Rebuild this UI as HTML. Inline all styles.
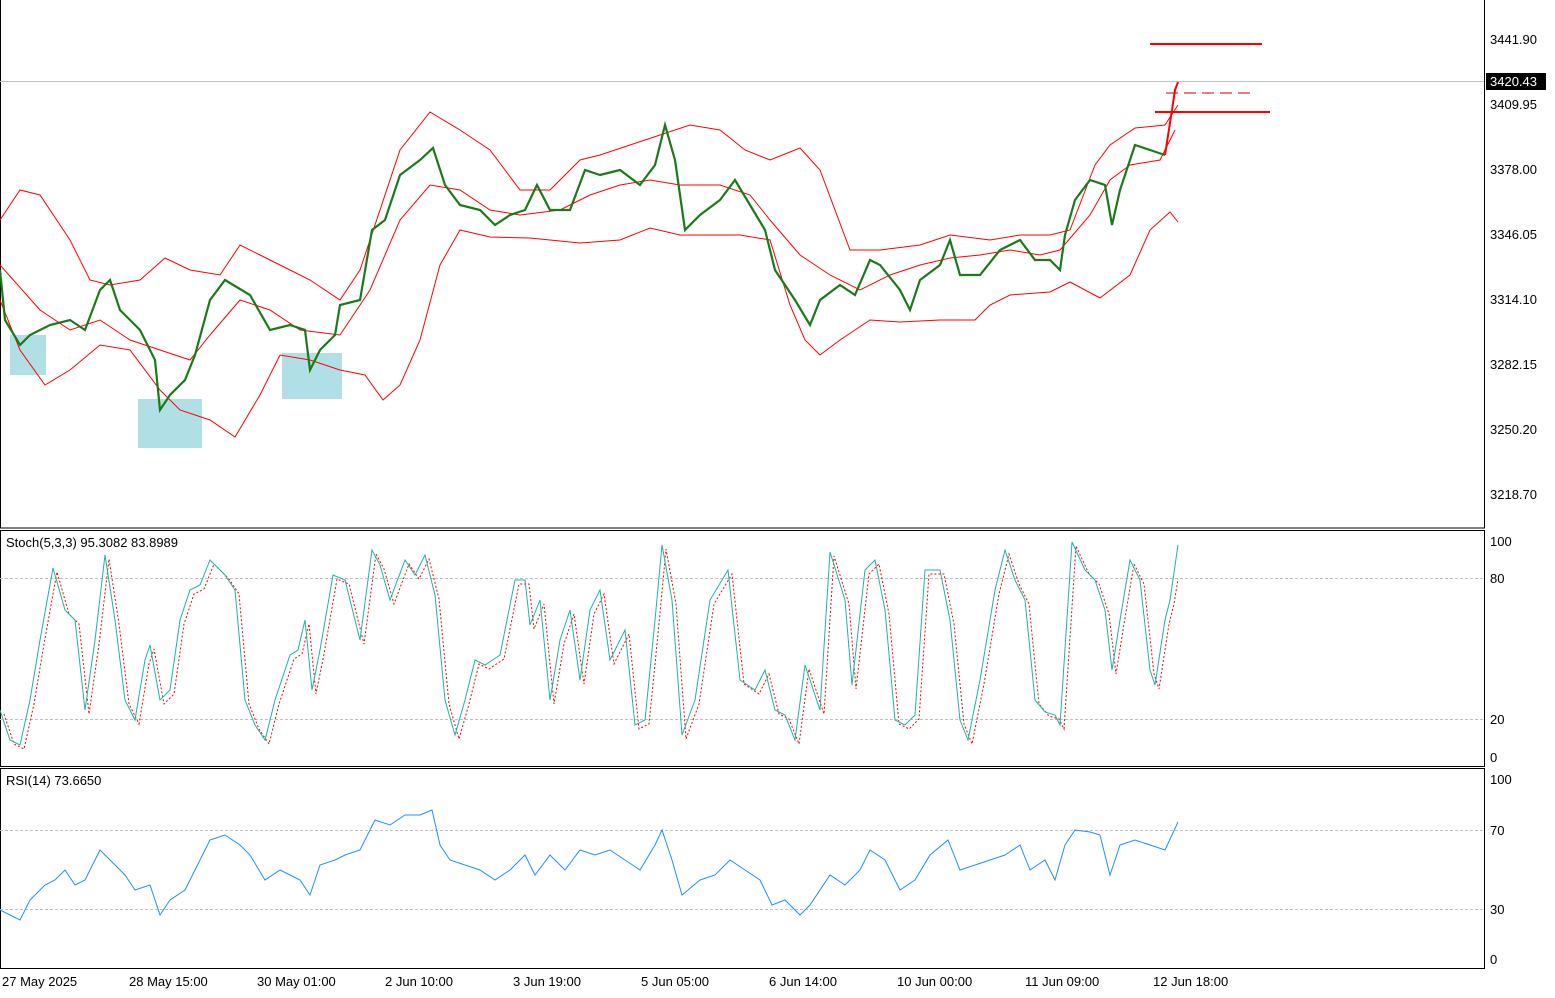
<!DOCTYPE html>
<html><head><meta charset="utf-8"><style>
body{margin:0;background:#fff;width:1555px;height:993px;overflow:hidden;font-family:"Liberation Sans",sans-serif}
svg text{font-family:"Liberation Sans",sans-serif;font-size:13px;fill:#000}
</style></head><body>
<svg width="1555" height="993" xmlns="http://www.w3.org/2000/svg">
<rect x="0" y="0" width="1555" height="993" fill="#fff"/>
<!-- panels -->
<rect x="0.5" y="-1" width="1484" height="529" fill="none" stroke="#000"/>
<rect x="0.5" y="530.5" width="1484" height="236" fill="none" stroke="#000"/>
<rect x="0.5" y="768.5" width="1484" height="200" fill="none" stroke="#000"/>
<!-- teal boxes -->
<rect x="10" y="335" width="36" height="40" fill="#b0e0e6"/>
<rect x="138" y="399" width="64" height="49" fill="#b0e0e6"/>
<rect x="282" y="353" width="60" height="46" fill="#b0e0e6"/>
<line x1="0" y1="81.5" x2="1484" y2="81.5" stroke="#c0c0c0"/>
<!-- bands -->
<g fill="none" stroke="#f00" stroke-width="1">
<polyline points="0,265 40,310 70,330 100,320 130,340 160,350 190,360 210,335 240,300 270,310 300,330 340,335 370,290 400,220 430,185 460,190 490,210 520,215 560,210 590,195 620,185 650,180 680,185 720,185 750,195 770,220 800,255 830,275 860,290 890,275 920,265 950,258 980,255 1010,250 1040,255 1060,250 1090,215 1110,180 1130,165 1160,160 1175,130"/>
<polyline points="0,220 20,190 40,195 70,240 90,280 110,285 140,280 165,258 190,270 220,275 240,245 260,255 290,270 310,280 340,300 360,270 380,210 400,150 430,112 460,130 490,150 520,190 550,190 580,160 600,155 630,145 660,135 690,125 720,130 745,150 770,160 800,148 820,170 850,250 880,250 920,245 950,235 990,240 1020,235 1050,235 1070,230 1095,165 1110,145 1135,128 1165,125 1178,105"/>
<polyline points="0,300 20,350 45,385 70,370 100,345 130,350 160,390 180,410 210,420 235,437 260,395 280,355 310,360 340,370 365,375 383,400 400,385 420,340 440,265 460,230 490,237 530,238 580,243 620,240 650,228 680,235 710,235 740,235 770,240 790,305 805,340 820,355 840,340 870,320 900,322 940,320 975,320 990,305 1010,295 1050,292 1070,282 1100,298 1130,275 1150,230 1170,212 1178,222"/>
</g>
<!-- price -->
<polyline fill="none" stroke="#1a7a1a" stroke-width="2.2" points="0,270 5,320 20,345 30,335 50,325 70,320 85,330 100,290 110,280 120,310 140,330 155,360 160,410 170,395 185,380 195,355 210,300 225,280 250,295 270,330 290,325 305,330 310,370 320,350 335,335 340,305 360,300 372,230 385,220 400,175 420,160 433,148 445,185 460,205 480,210 495,225 510,215 525,210 537,185 550,210 570,210 585,170 600,175 620,170 640,185 655,165 665,125 675,160 685,230 700,215 720,200 735,180 750,205 765,230 775,270 795,300 810,325 820,300 840,285 855,295 870,260 880,265 900,290 910,310 920,280 940,265 950,240 960,275 980,275 1000,250 1020,240 1035,260 1050,260 1060,270 1065,235 1075,200 1090,180 1105,185 1112,225 1120,190 1135,145 1150,150 1165,155"/>
<polyline fill="none" stroke="#f00" stroke-width="2" points="1165,155 1172,110 1175,90 1178,82"/>
<line x1="1150" y1="44" x2="1262" y2="44" stroke="#f00" stroke-width="2"/>
<line x1="1155" y1="112" x2="1270" y2="112" stroke="#f00" stroke-width="2"/>
<line x1="1166" y1="93" x2="1256" y2="93" stroke="#c00" stroke-dasharray="12,6"/>
<!-- axis -->
<g>
<text x="1490" y="44">3441.90</text>
<rect x="1486" y="73" width="60" height="17" fill="#000"/>
<text x="1490" y="86" style="fill:#fff">3420.43</text>
<text x="1490" y="109">3409.95</text>
<text x="1490" y="174">3378.00</text>
<text x="1490" y="239">3346.05</text>
<text x="1490" y="304">3314.10</text>
<text x="1490" y="369">3282.15</text>
<text x="1490" y="434">3250.20</text>
<text x="1490" y="499">3218.70</text>
</g>
<!-- stoch -->
<text x="6" y="547">Stoch(5,3,3) 95.3082 83.8989</text>
<line x1="0" y1="578.5" x2="1484" y2="578.5" stroke="#c0c0c0" stroke-dasharray="3,2"/>
<line x1="0" y1="719.5" x2="1484" y2="719.5" stroke="#c0c0c0" stroke-dasharray="3,2"/>
<text x="1490" y="546">100</text><text x="1490" y="583">80</text><text x="1490" y="724">20</text><text x="1490" y="762">0</text>
<polyline fill="none" stroke="#f00" stroke-dasharray="2,2" transform="translate(4,4)" points="0,710 10,740 20,745 30,700 40,640 53,568 65,610 75,620 85,710 95,640 105,555 115,620 125,700 135,720 145,660 150,645 160,700 170,690 180,620 190,590 200,585 210,560 225,575 235,590 245,700 255,725 265,740 275,700 290,655 298,650 305,620 312,690 320,650 333,575 345,580 355,620 360,640 372,550 380,565 390,600 405,560 415,575 425,555 435,595 445,700 455,735 465,700 475,660 485,665 500,655 515,580 525,580 530,625 540,600 550,700 560,640 570,610 580,680 590,610 600,590 610,660 625,630 635,725 645,720 655,620 662,545 672,600 682,735 695,700 710,600 728,570 740,680 755,690 765,670 775,710 785,715 795,740 805,665 820,710 830,552 845,600 852,685 865,570 875,560 885,610 895,720 905,725 915,715 925,570 940,570 950,620 960,720 968,740 980,680 995,590 1005,550 1015,580 1025,600 1035,700 1045,712 1055,715 1060,725 1072,542 1085,570 1095,580 1105,610 1112,670 1120,620 1130,560 1140,580 1150,670 1155,685 1165,620 1170,600 1174,575"/>
<polyline fill="none" stroke="#20b2aa" points="0,710 10,740 20,745 30,700 40,640 53,568 65,610 75,620 85,710 95,640 105,555 115,620 125,700 135,720 145,660 150,645 160,700 170,690 180,620 190,590 200,585 210,560 225,575 235,590 245,700 255,725 265,740 275,700 290,655 298,650 305,620 312,690 320,650 333,575 345,580 355,620 360,640 372,550 380,565 390,600 405,560 415,575 425,555 435,595 445,700 455,735 465,700 475,660 485,665 500,655 515,580 525,580 530,625 540,600 550,700 560,640 570,610 580,680 590,610 600,590 610,660 625,630 635,725 645,720 655,620 662,545 672,600 682,735 695,700 710,600 728,570 740,680 755,690 765,670 775,710 785,715 795,740 805,665 820,710 830,552 845,600 852,685 865,570 875,560 885,610 895,720 905,725 915,715 925,570 940,570 950,620 960,720 968,740 980,680 995,590 1005,550 1015,580 1025,600 1035,700 1045,712 1055,715 1060,725 1072,542 1085,570 1095,580 1105,610 1112,670 1120,620 1130,560 1140,580 1150,670 1155,685 1165,620 1170,600 1178,545"/>
<!-- rsi -->
<text x="6" y="785">RSI(14) 73.6650</text>
<line x1="0" y1="830.5" x2="1484" y2="830.5" stroke="#c0c0c0" stroke-dasharray="3,2"/>
<line x1="0" y1="909.5" x2="1484" y2="909.5" stroke="#c0c0c0" stroke-dasharray="3,2"/>
<text x="1490" y="784">100</text><text x="1490" y="835">70</text><text x="1490" y="914">30</text><text x="1490" y="964">0</text>
<polyline fill="none" stroke="#1e90ff" points="0,910 10,915 20,920 30,900 45,885 55,880 65,870 75,885 85,880 100,850 110,860 125,875 135,890 150,885 160,915 170,900 185,890 195,870 210,840 225,835 240,845 250,855 265,880 280,870 300,880 310,895 320,865 335,860 345,855 360,850 375,820 390,825 405,815 420,815 432,810 440,845 450,860 465,865 480,870 495,880 510,870 525,855 535,875 550,855 565,870 580,850 595,855 610,850 625,860 640,870 655,845 662,830 672,860 682,895 700,880 715,875 730,860 745,870 760,880 772,905 785,900 800,915 810,905 830,875 845,885 860,870 870,850 885,860 900,890 915,880 930,855 948,840 960,870 975,865 990,860 1005,855 1020,845 1030,870 1045,860 1055,880 1065,845 1075,830 1090,832 1100,835 1110,875 1120,845 1135,840 1150,845 1165,850 1178,822"/>
<!-- time axis -->
<g>
<text x="2" y="986">27 May 2025</text>
<text x="129" y="986">28 May 15:00</text>
<text x="257" y="986">30 May 01:00</text>
<text x="385" y="986">2 Jun 10:00</text>
<text x="513" y="986">3 Jun 19:00</text>
<text x="641" y="986">5 Jun 05:00</text>
<text x="769" y="986">6 Jun 14:00</text>
<text x="897" y="986">10 Jun 00:00</text>
<text x="1025" y="986">11 Jun 09:00</text>
<text x="1153" y="986">12 Jun 18:00</text>
</g>
</svg>
</body></html>
